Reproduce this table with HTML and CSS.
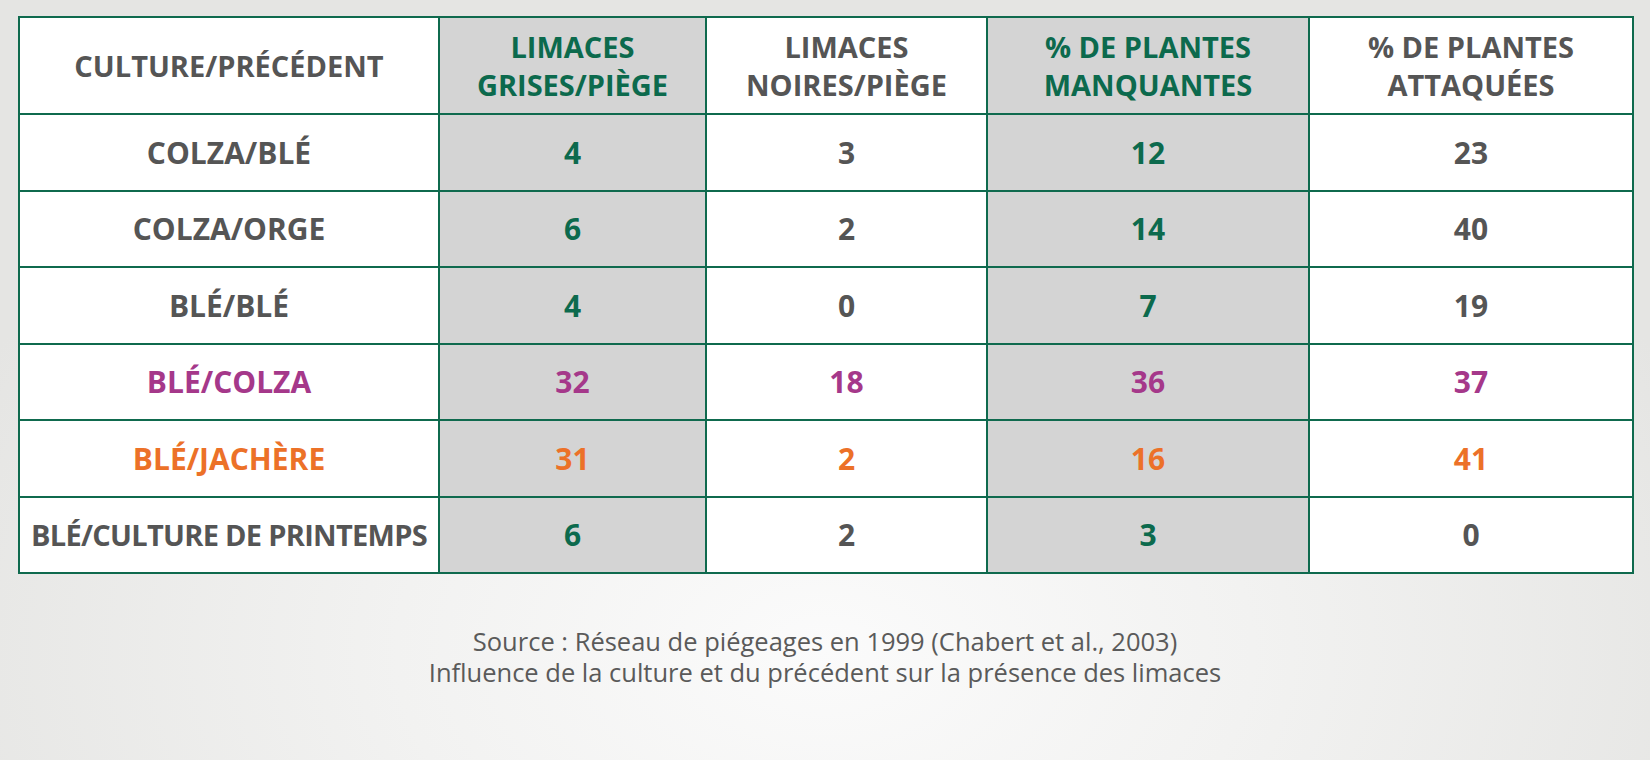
FILE: index.html
```html
<!DOCTYPE html>
<html lang="fr">
<head>
<meta charset="utf-8">
<title>Limaces</title>
<link rel="stylesheet" href="styles.css">
</head>
<body>
<div class="page">
  <table class="grid">
    <colgroup>
      <col class="c1"><col class="c2"><col class="c3"><col class="c4"><col class="c5">
    </colgroup>
    <thead>
      <tr class="head">
        <th>CULTURE/PRÉCÉDENT</th>
        <th class="shade green">LIMACES<br>GRISES/PIÈGE</th>
        <th>LIMACES<br>NOIRES/PIÈGE</th>
        <th class="shade green">% DE PLANTES<br>MANQUANTES</th>
        <th>% DE PLANTES<br>ATTAQUÉES</th>
      </tr>
    </thead>
    <tbody>
      <tr class="r77">
        <td>COLZA/BLÉ</td><td class="shade green">4</td><td>3</td><td class="shade green">12</td><td>23</td>
      </tr>
      <tr class="r76">
        <td>COLZA/ORGE</td><td class="shade green">6</td><td>2</td><td class="shade green">14</td><td>40</td>
      </tr>
      <tr class="r77">
        <td>BLÉ/BLÉ</td><td class="shade green">4</td><td>0</td><td class="shade green">7</td><td>19</td>
      </tr>
      <tr class="r76 purple">
        <td>BLÉ/COLZA</td><td class="shade">32</td><td>18</td><td class="shade">36</td><td>37</td>
      </tr>
      <tr class="r77 orange">
        <td>BLÉ/JACHÈRE</td><td class="shade">31</td><td>2</td><td class="shade">16</td><td>41</td>
      </tr>
      <tr class="r76">
        <td class="tight">BLÉ/CULTURE DE PRINTEMPS</td><td class="shade green">6</td><td>2</td><td class="shade green">3</td><td>0</td>
      </tr>
    </tbody>
  </table>
  <p class="caption">Source : Réseau de piégeages en 1999 (Chabert et al., 2003)<br>Influence de la culture et du précédent sur la présence des limaces</p>
</div>
</body>
</html>
```

FILE: styles.css
```css
html, body {
  margin: 0;
  padding: 0;
}
body {
  width: 1650px;
  height: 760px;
  overflow: hidden;
  background: radial-gradient(ellipse 950px 620px at 825px 650px, #fbfbfb 0%, #f2f2f1 45%, #e5e5e3 100%);
  font-family: "Open Sans", "Liberation Sans", sans-serif;
}
.page {
  padding: 16px 0 0 18px;
}
.grid {
  border-collapse: collapse;
  table-layout: fixed;
  width: 1614px;
  background: #ffffff;
}
.c1 { width: 420px; }
.c2 { width: 267px; }
.c3 { width: 281px; }
.c4 { width: 322px; }
.c5 { width: 324px; }
.grid th, .grid td {
  border: 2px solid #0f6a4e;
  text-align: center;
  vertical-align: middle;
  padding: 0;
  font-weight: 700;
  color: #555555;
}
.grid th {
  font-size: 29px;
  line-height: 37.5px;
}
.grid td {
  font-size: 30px;
  line-height: 38px;
}
.grid td.tight {
  font-size: 29px;
  letter-spacing: -0.7px;
}
.head { height: 97px; }
.r77 { height: 77px; }
.r76 { height: 76px; }
.grid .shade { background: #d4d4d4; }
.grid .green { color: #0c6a4d; }
.purple td, .grid .purple td.shade { color: #a5388a; }
.orange td, .grid .orange td.shade { color: #ec7128; }
.caption {
  margin: 52px 0 0 -18px;
  text-align: center;
  font-size: 25.5px;
  line-height: 31px;
  color: #5a5a5a;
}
```
